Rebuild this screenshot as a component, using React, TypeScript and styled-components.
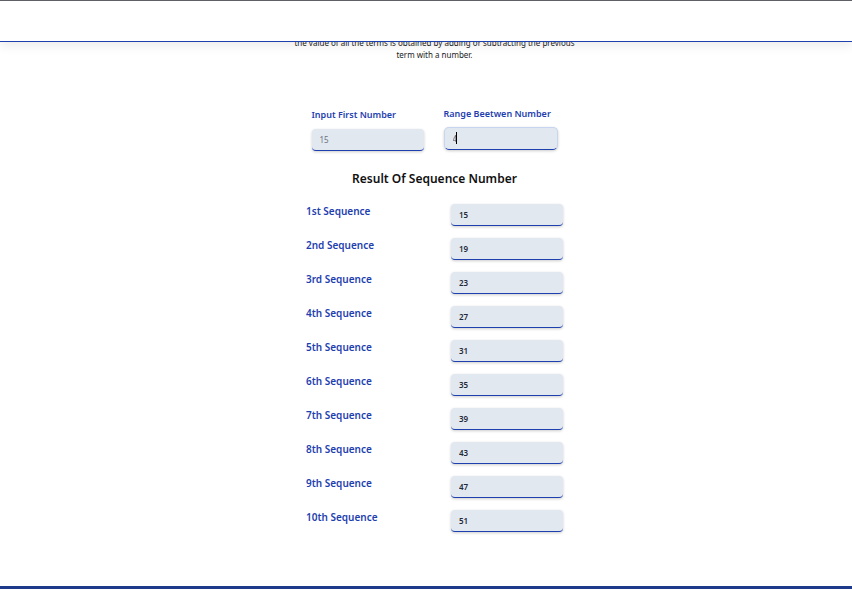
import React, { useState } from "react";
import styled, { createGlobalStyle, css } from "styled-components";

const GlobalStyle = createGlobalStyle`
  *, *::before, *::after { box-sizing: border-box; }
  body {
    margin: 0;
    background: #fff;
    font-family: "Noto Sans", "Open Sans", sans-serif;
    overflow-x: hidden;
  }
`;

const Page = styled.div`
  display: flex;
  flex-direction: column;
  min-height: 100vh;
`;

const Header = styled.header`
  position: sticky;
  top: 0;
  z-index: 1;
  flex: none;
  height: 42px;
  background: #fff;
  border-top: 1px solid #5f5f66;
  border-bottom: 1px solid #1e40af;
  box-shadow: 0 4px 10px rgba(0, 0, 0, 0.08);
`;

const Main = styled.main`
  display: flex;
  flex: 1;
  flex-direction: column;
  align-items: center;
  padding-left: 17px;
`;

const Intro = styled.p`
  max-width: 284px;
  margin: -5px 0 0;
  color: #222;
  font-size: 8px;
  line-height: 12px;
  text-align: center;
`;

const Form = styled.form`
  display: flex;
  gap: 20px;
  margin-top: 46px;
`;

const Field = styled.div<{ $raised?: boolean }>`
  display: flex;
  flex-direction: column;
  gap: ${({ $raised }) => ($raised ? 6 : 7)}px;
  padding-top: ${({ $raised }) => ($raised ? 0 : 1)}px;
`;

const labelText = css`
  color: #1e40af;
  font-weight: 600;
  white-space: nowrap;
`;

const FieldLabel = styled.label`
  ${labelText}
  font-size: 9px;
  line-height: 14px;
`;

const boxStyle = css`
  display: block;
  width: 112px;
  height: 22px;
  padding: 0 8px;
  background: #e2e8f0;
  border: 0;
  border-bottom: 1px solid #1e40af;
  border-radius: 4px;
  outline: none;
  box-shadow: 0 1px 3px rgba(0, 0, 0, 0.2);
  font-family: inherit;
  font-size: 8px;
  line-height: 20px;
`;

const NumberInput = styled.input<{ $active?: boolean }>`
  ${boxStyle}
  color: #6b7280;
  ${({ $active }) =>
    $active &&
    css`
      width: 114px;
      height: 23px;
      border: 1px solid #c7d5f0;
      border-bottom-color: #1e40af;
      border-radius: 5px;
      color: #4b5563;
      caret-color: transparent;
    `}
`;

const InputWrap = styled.div`
  position: relative;
`;

const Caret = styled.span`
  position: absolute;
  top: 5px;
  left: 12px;
  width: 1px;
  height: 12px;
  background: #000;
`;

const Title = styled.h2`
  margin: 18px 0 0;
  color: #111;
  font-size: 12px;
  font-weight: 600;
  line-height: 20px;
`;

const Results = styled.div`
  display: flex;
  flex-direction: column;
  gap: 12px;
  width: 257px;
  margin-top: 15px;
  padding-bottom: 54px;
`;

const Row = styled.div`
  display: flex;
  justify-content: space-between;
  align-items: flex-start;
`;

const RowLabel = styled.label`
  ${labelText}
  font-size: 10px;
  line-height: 15px;
`;

const ResultBox = styled.input`
  ${boxStyle}
  color: #1f2937;
  font-weight: 600;
`;

const Footer = styled.footer`
  flex: none;
  height: 3px;
  background: #1e3a8a;
`;

const ordinals = ["1st", "2nd", "3rd", "4th", "5th", "6th", "7th", "8th", "9th", "10th"];

export default function App() {
  const [first, setFirst] = useState("15");
  const [range, setRange] = useState("4");

  return (
    <>
      <GlobalStyle />
      <Page>
        <Header />
        <Main>
          <Intro>
            the value of all the terms is obtained by adding or subtracting the previous term with a number.
          </Intro>
          <Form onSubmit={(e) => e.preventDefault()}>
            <Field>
              <FieldLabel htmlFor="first">Input First Number</FieldLabel>
              <NumberInput id="first" inputMode="numeric" value={first} onChange={(e) => setFirst(e.target.value)} />
            </Field>
            <Field $raised>
              <FieldLabel htmlFor="range">Range Beetwen Number</FieldLabel>
              <InputWrap>
                <NumberInput
                  id="range"
                  $active
                  inputMode="numeric"
                  value={range}
                  onChange={(e) => setRange(e.target.value)}
                />
                <Caret aria-hidden="true" />
              </InputWrap>
            </Field>
          </Form>
          <Title>Result Of Sequence Number</Title>
          <Results>
            {ordinals.map((ordinal, i) => (
              <Row key={ordinal}>
                <RowLabel htmlFor={ordinal}>{ordinal} Sequence</RowLabel>
                <ResultBox id={ordinal} readOnly value={Number(first) + i * Number(range)} />
              </Row>
            ))}
          </Results>
        </Main>
        <Footer />
      </Page>
    </>
  );
}
